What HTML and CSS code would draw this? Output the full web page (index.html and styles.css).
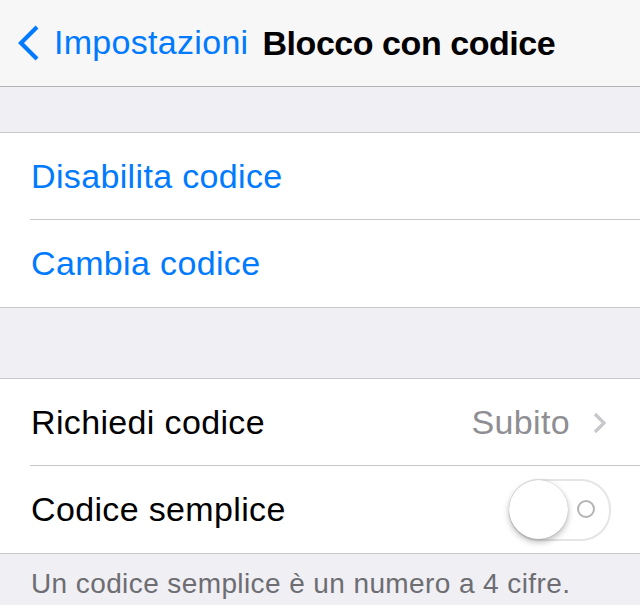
FILE: index.html
```html
<!DOCTYPE html>
<html>
<head>
<meta charset="utf-8">
<link rel="stylesheet" href="styles.css">
</head>
<body>
<div class="screen">
  <header class="navbar">
    <a class="back">
      <svg class="back-icon" width="26" height="40" viewBox="0 0 26 40"><path d="M22 4 L6 20 L22 36" fill="none" stroke="#007aff" stroke-width="4.2"/></svg>
      <span>Impostazioni</span>
    </a>
    <h1 class="title">Blocco con codice</h1>
  </header>
  <div class="spacer spacer-top"></div>
  <section class="group">
    <div class="row"><span class="link">Disabilita codice</span></div>
    <div class="row"><span class="link">Cambia codice</span></div>
  </section>
  <div class="spacer spacer-mid"></div>
  <section class="group">
    <div class="row">
      <span class="label">Richiedi codice</span>
      <span class="detail">Subito
        <svg class="chev" width="16" height="24" viewBox="0 0 16 24"><path d="M3 3 L12 12 L3 21" fill="none" stroke="#c7c7cc" stroke-width="3.2"/></svg>
      </span>
    </div>
    <div class="row">
      <span class="label">Codice semplice</span>
      <span class="switch"><span class="off-mark"></span><span class="knob"></span></span>
    </div>
  </section>
  <p class="footer">Un codice semplice è un numero a 4 cifre.</p>
</div>
</body>
</html>
```
FILE: styles.css
```css
html, body { margin: 0; padding: 0; }
body {
  background: #efeff4;
  font-family: "Liberation Sans", Arial, sans-serif;
  width: 640px;
  height: 605px;
  overflow: hidden;
}
.screen { width: 640px; }
.navbar {
  height: 86px;
  background: #f7f7f7;
  border-bottom: 1px solid #b2b2b2;
  display: flex;
  align-items: center;
  padding-left: 15px;
  box-sizing: content-box;
}
.back {
  display: flex;
  align-items: center;
  color: #007aff;
  font-size: 34px;
  letter-spacing: 0.3px;
  gap: 13px;
  margin-top: -1px;
}
.back-icon { display: block; }
.title {
  margin: 0 0 0 14px;
  font-size: 34px;
  font-weight: bold;
  letter-spacing: -0.45px;
  color: #000;
}
.spacer-top { height: 45px; }
.spacer-mid { height: 70px; }
.group {
  background: #fff;
  border-top: 1px solid #c8c7cc;
  border-bottom: 1px solid #c8c7cc;
  padding-bottom: 1px;
}
.row {
  height: 86px;
  margin-left: 30px;
  padding-right: 30px;
  display: flex;
  align-items: center;
  justify-content: space-between;
  font-size: 34px;
  letter-spacing: 0.35px;
}
.row + .row { border-top: 1px solid #c8c7cc; }
.link { color: #007aff; margin-left: 1px; }
.label { color: #000; margin-left: 1px; }
.detail {
  color: #8e8e93;
  display: flex;
  align-items: center;
  gap: 22px;
  margin-right: 2px;
}
.chev { display: block; margin-top: 2px; }
.switch {
  position: relative;
  width: 98px;
  height: 58px;
  border-radius: 30px;
  border: 2px solid #e5e5e5;
  background: #fff;
  margin-right: -1px;
  margin-top: 2px;
}
.knob {
  position: absolute;
  left: -2px;
  top: -1px;
  width: 59px;
  height: 59px;
  border-radius: 50%;
  background: #fff;
  box-shadow: 0 3px 6px rgba(0,0,0,0.28), 0 0 1px rgba(0,0,0,0.3);
}
.off-mark {
  position: absolute;
  right: 14px;
  top: 19px;
  width: 14px;
  height: 14px;
  border-radius: 50%;
  border: 2px solid #b3b3b3;
}
.footer {
  margin: 14px 0 0 31px;
  font-size: 28px;
  letter-spacing: 0.4px;
  color: #6d6d72;
}
```
